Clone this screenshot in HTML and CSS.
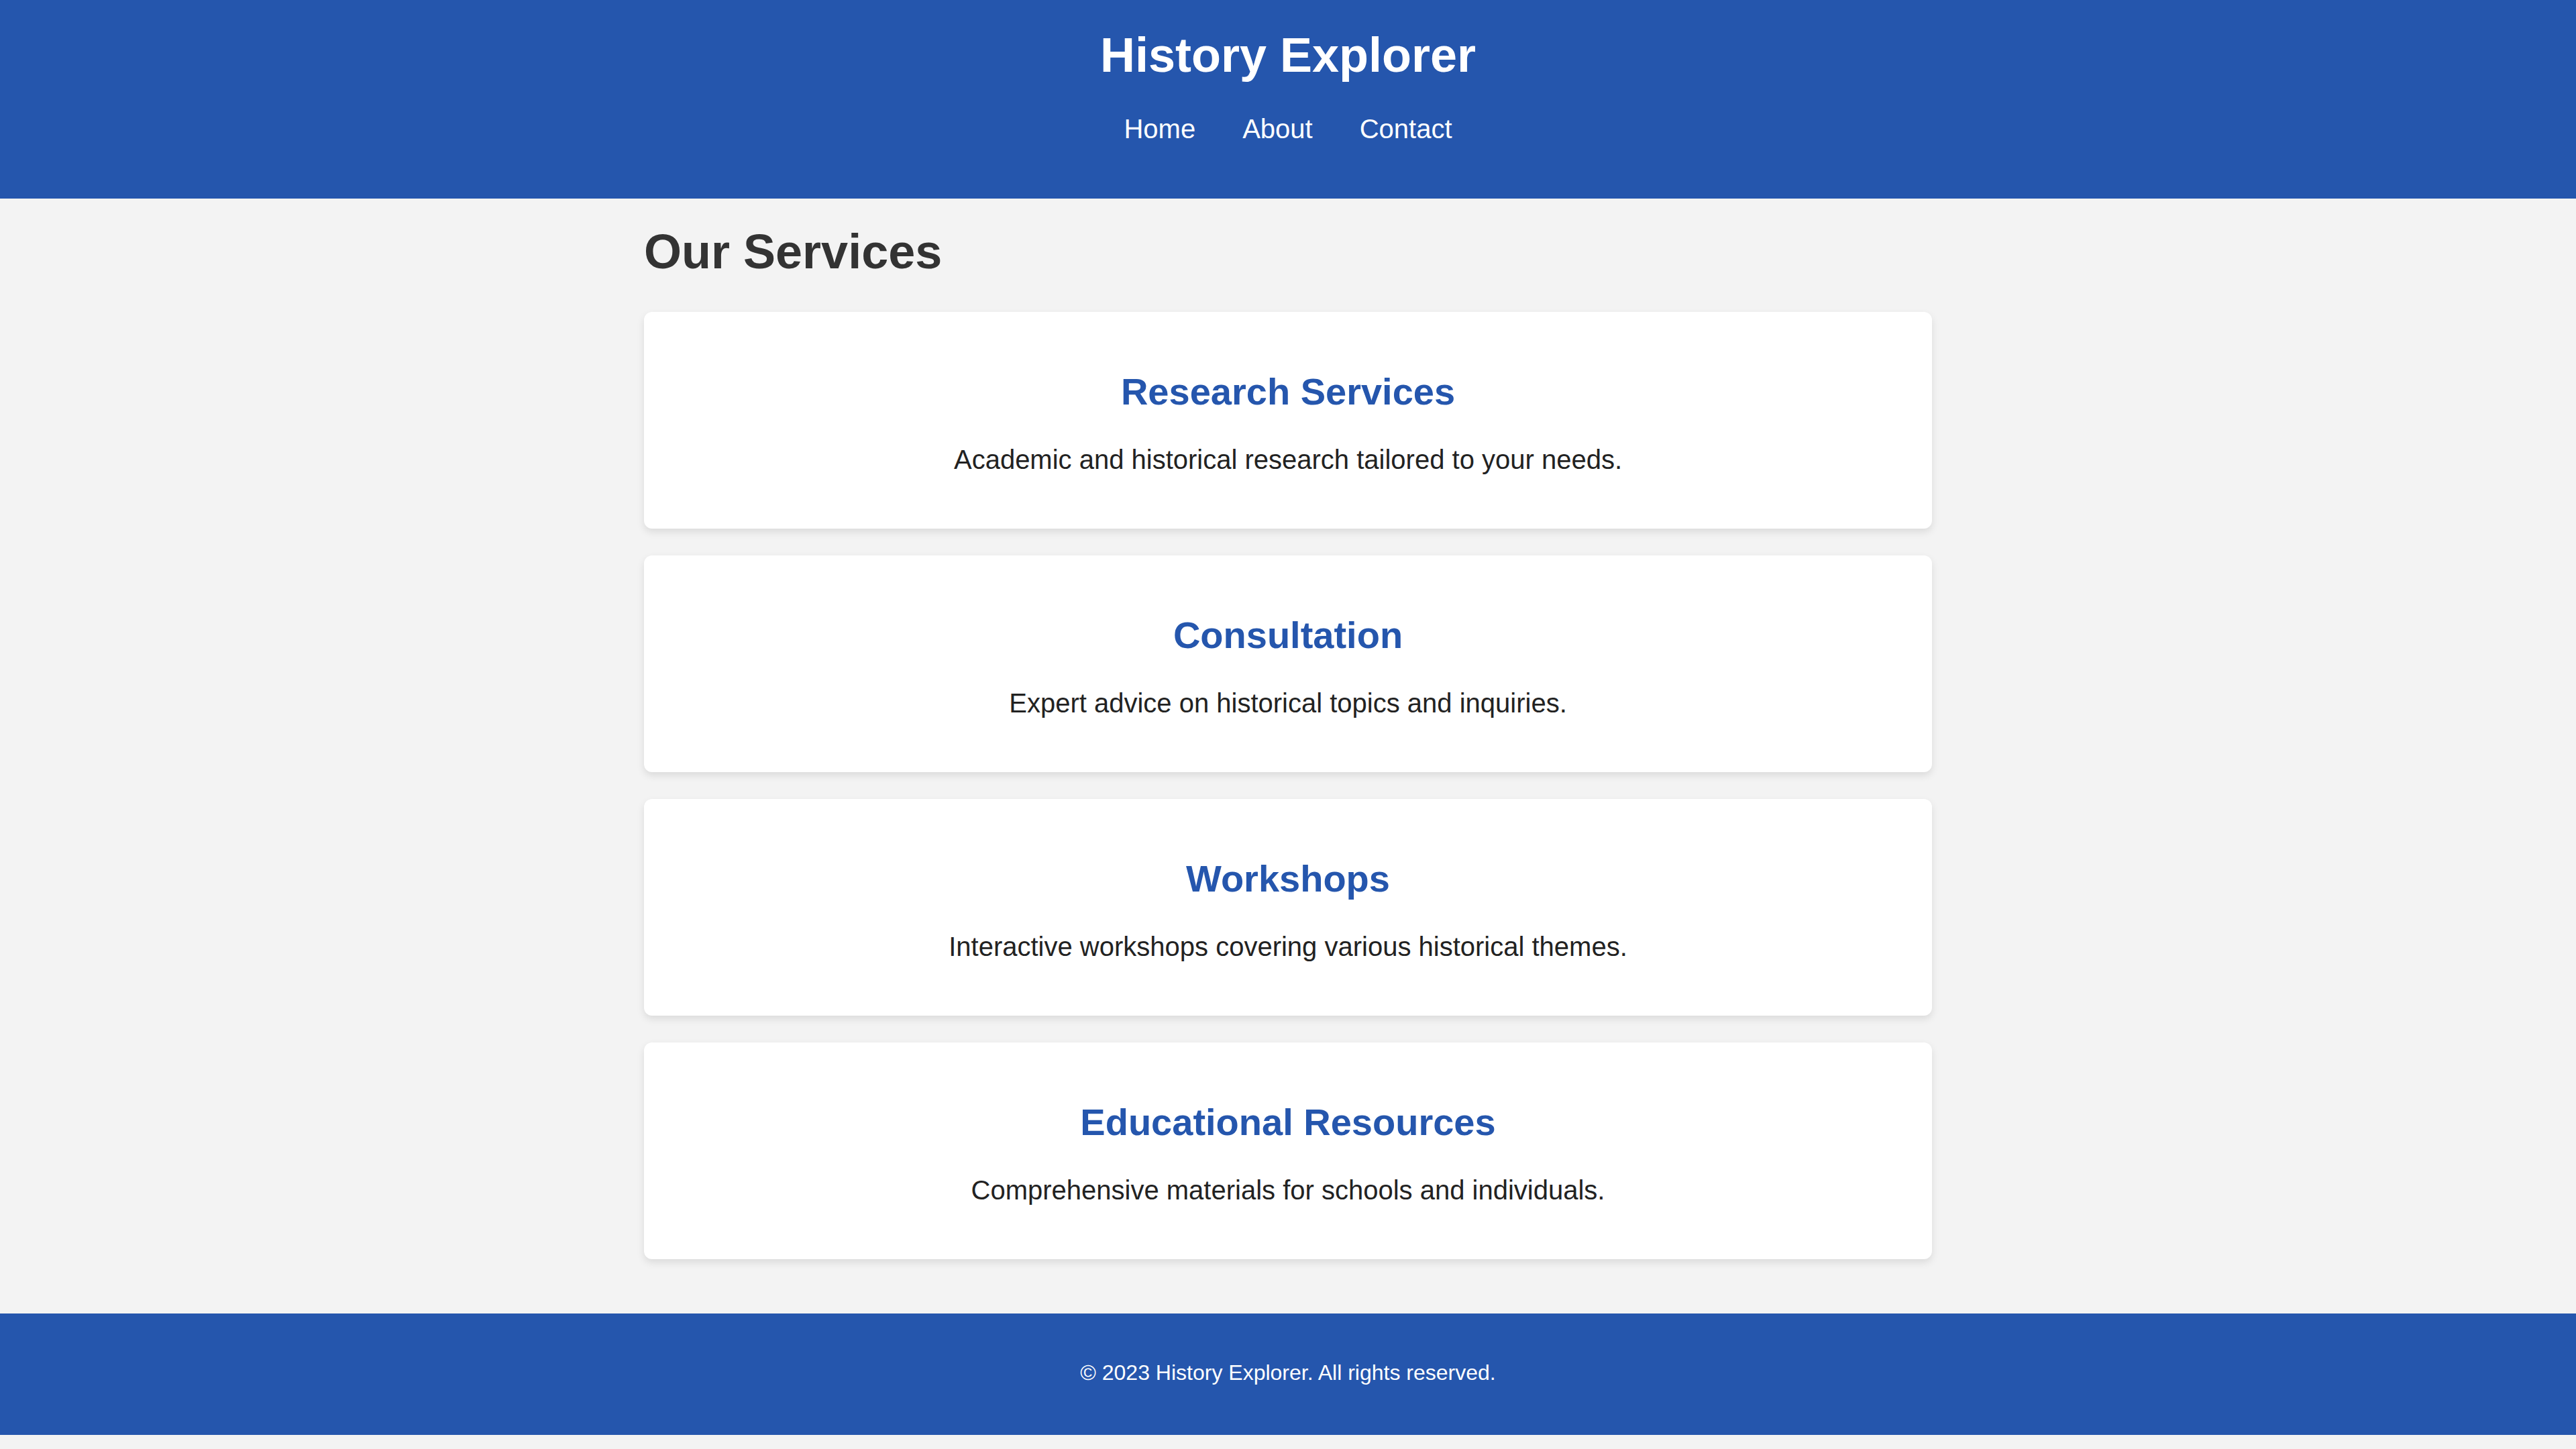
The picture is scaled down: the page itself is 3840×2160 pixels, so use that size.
FILE: index.html
```html
<!DOCTYPE html>
<html lang="en">
<head>
<meta charset="utf-8">
<title>History Explorer - Services</title>
<link rel="stylesheet" href="styles.css">
</head>
<body>
<header class="site-header">
  <h1 class="site-title">History Explorer</h1>
  <nav class="site-nav">
    <a href="#">Home</a>
    <a href="#">About</a>
    <a href="#">Contact</a>
  </nav>
</header>
<main class="container">
  <h2 class="section-title">Our Services</h2>
  <section class="card">
    <h3 class="card-title">Research Services</h3>
    <p class="card-text">Academic and historical research tailored to your needs.</p>
  </section>
  <section class="card">
    <h3 class="card-title">Consultation</h3>
    <p class="card-text">Expert advice on historical topics and inquiries.</p>
  </section>
  <section class="card">
    <h3 class="card-title">Workshops</h3>
    <p class="card-text">Interactive workshops covering various historical themes.</p>
  </section>
  <section class="card">
    <h3 class="card-title">Educational Resources</h3>
    <p class="card-text">Comprehensive materials for schools and individuals.</p>
  </section>
</main>
<footer class="site-footer">
  <p class="footer-text">&copy; 2023 History Explorer. All rights reserved.</p>
</footer>
</body>
</html>
```

FILE: styles.css
```css
html, body {
  margin: 0;
  padding: 0;
}

body {
  font-family: "Liberation Sans", Arial, Helvetica, sans-serif;
  font-size: 40px;
  background: #f3f3f3;
  color: #333;
  padding-bottom: 22px;
}

.site-header {
  background: #2556ad;
  color: #fff;
  text-align: center;
  padding: 41px 0 81px;
}

.site-title {
  margin: 0 0 47px;
  font-size: 72px;
  font-weight: bold;
  line-height: normal;
}

.site-nav {
  display: flex;
  justify-content: center;
  gap: 70px;
}

.site-nav a {
  color: #fff;
  text-decoration: none;
  font-size: 40px;
  line-height: normal;
}

.container {
  width: 1920px;
  margin: 0 auto;
  padding: 38px 0 41px;
  display: flex;
  flex-direction: column;
}

.section-title {
  margin: 0 0 49px;
  font-size: 72px;
  font-weight: bold;
  line-height: normal;
  color: #333;
}

.card {
  background: #fff;
  border-radius: 12px;
  box-shadow: 0 5px 12px rgba(0, 0, 0, 0.1);
  padding: 40px 48px;
  margin-bottom: 40px;
  text-align: center;
}

.card-title {
  margin: 46px 0 47px;
  font-size: 56px;
  font-weight: bold;
  line-height: normal;
  color: #2556ad;
}

.card-text {
  margin: 0 0 40px;
  font-size: 40px;
  line-height: normal;
  color: #222;
}

.site-footer {
  background: #2556ad;
  color: #fff;
  text-align: center;
  padding: 70px 0 74px;
}

.footer-text {
  margin: 0;
  font-size: 32px;
  line-height: normal;
}
```
